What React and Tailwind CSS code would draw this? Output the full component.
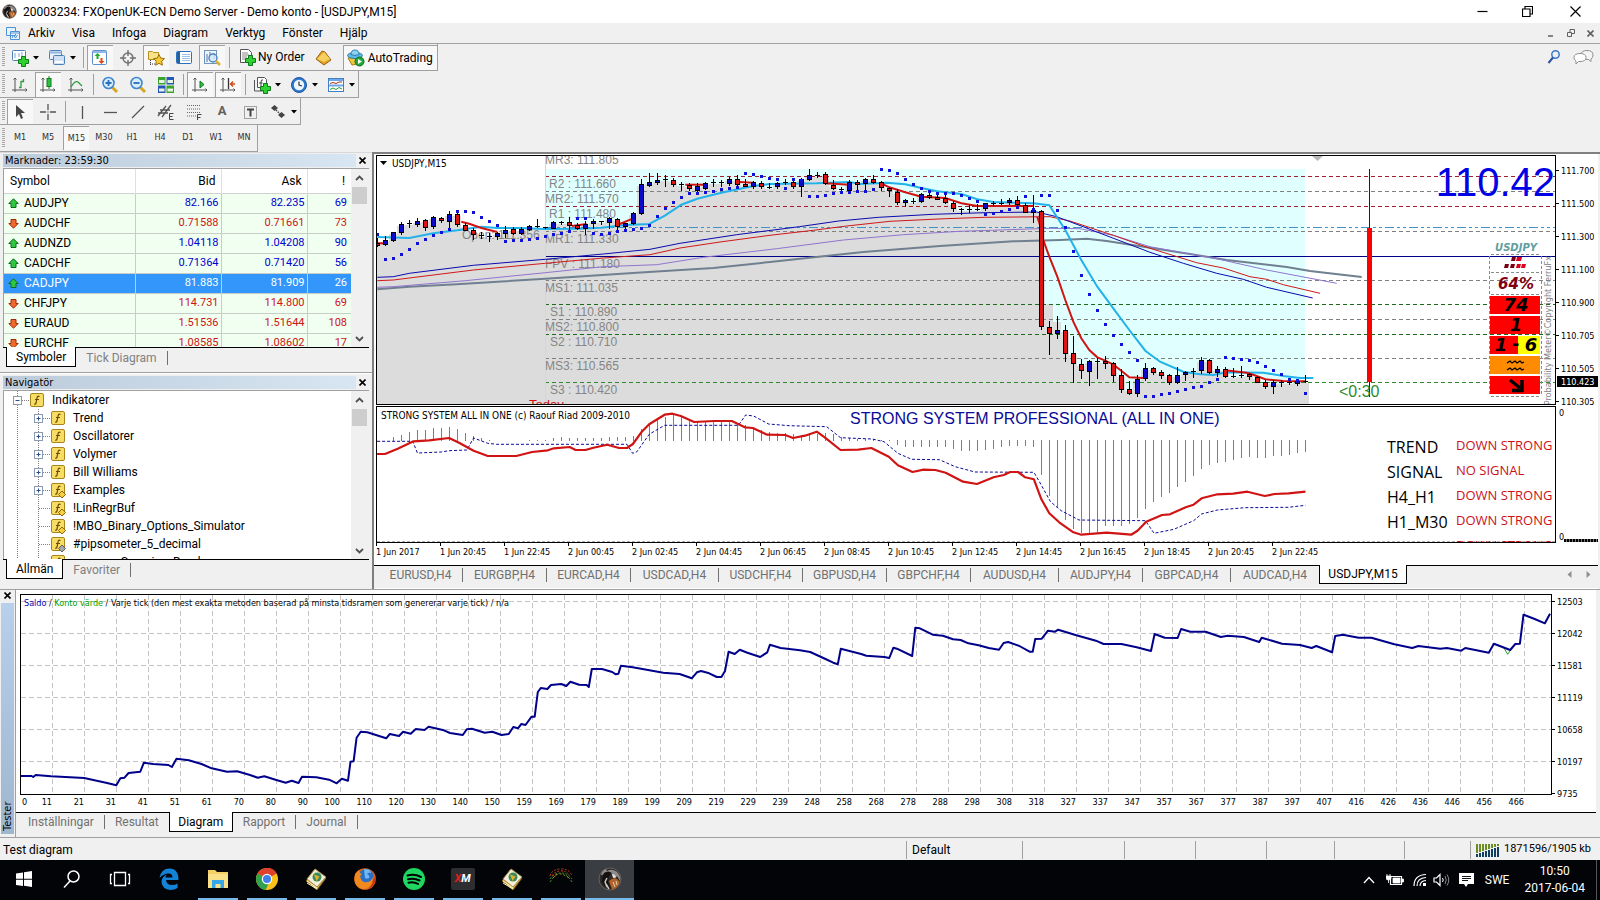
import React from "react";

const SMALL = "font-['DejaVu_Sans_Condensed','DejaVu_Sans',sans-serif]";

/* ---------- price chart data (third-of-a-pixel units, 24 units per bar) ---------- */

const CANDLES =
  "265 278 284 290 r,258 270 284 288 b,246 247 272 276 b,217 222 248 256 b,210 220 223 234 k,205 213 224 230 b,208 210 234 242 r,198 202 230 238 b,200 203 212 218 r,183 192 215 244 b,186 192 226 230 r,218 225 242 244 r,235 240 256 270 r,246 256 259 268 k,248 258 261 276 k,246 250 261 270 b,228 240 251 264 b,232 238 251 254 r,232 237 251 254 b,226 229 239 242 b,208 229 233 234 k,230 231 234 236 k,212 217 236 238 b,213 217 220 226 k,202 217 227 240 r,220 225 238 240 r,214 222 236 256 b,208 213 223 236 b,212 214 217 224 k,202 205 218 236 b,204 206 230 240 r,218 220 230 244 b,186 190 221 224 b,87 102 191 195 b,69 97 107 110 b,70 90 97 104 b,75 88 92 112 k,84 90 104 112 r,96 102 105 122 k,100 104 118 122 r,98 108 122 130 b,97 100 116 120 b,88 95 98 110 k,90 96 99 112 k,82 87 102 108 b,75 87 104 108 r,88 102 108 110 r,92 96 112 116 b,92 98 112 116 r,100 110 113 118 k,96 100 112 116 b,88 96 99 106 k,84 97 112 116 r,84 86 112 140 b,57 76 90 92 b,66 74 77 84 k,66 72 103 104 r,90 104 116 120 r,112 117 121 124 k,90 96 122 126 b,90 97 106 122 r,84 88 102 122 b,75 88 98 102 r,92 97 114 122 r,112 114 124 140 r,118 126 158 164 r,146 150 158 170 b,144 152 155 162 k,130 133 156 158 b,122 135 142 146 r,132 140 146 150 r,134 144 158 162 r,154 158 176 185 r,174 176 180 194 k,166 177 180 190 k,162 177 180 182 k,158 160 178 182 b,154 158 161 168 k,148 158 161 164 k,144 150 160 164 b,138 150 166 170 r,160 166 188 190 r,135 181 188 218 b,180 182 530 540 r,514 532 551 614 r,498 541 551 568 b,524 541 611 636 r,558 610 643 698 r,626 642 662 686 r,630 633 665 708 b,624 633 637 686 k,618 632 641 656 r,636 640 677 696 r,658 676 719 730 r,694 718 731 734 r,676 687 731 740 b,640 655 686 694 b,650 655 668 676 r,660 667 677 686 r,672 676 700 704 r,652 675 698 702 b,662 666 676 692 b,655 664 667 684 k,622 630 662 672 b,626 630 668 672 r,648 657 668 680 b,650 657 682 684 r,654 679 682 684 k,648 676 679 684 k,668 671 680 690 r,678 680 698 700 r,690 697 712 718 r,690 697 710 732 b,690 697 700 710 k,688 697 700 706 k,690 694 700 708 b,676 693 696 698 k"
    .split(",")
    .map((s) => {
      const [h, t, b, l, c] = s.split(" ");
      return { h: +h, t: +t, b: +b, l: +l, c };
    });

const DOTS = [
  252, 326, 323, 311, 296, 279, 266, 254, 246, 238, 183, 183, 185, 201, 213, 225, 272, 270, 270, 267, 264, 258, 252, 248, 244, 205, 205, 250,
  252, 250, 244, 240, 236, 234, 226, 198, 175, 156, 140, 130, 128, 127, 122, 116, 114, 112, 70, 72, 78, 84, 86, 114, 88, 90, 138, 138, 136,
  130, 126, 126, 124, 124, 116, 57, 61, 70, 88, 102, 114, 124, 128, 129, 130, 135, 145, 154, 192, 189, 184, 177, 172, 139, 178, 135, 135, 180,
  231, 303, 376, 433, 480, 522, 555, 582, 606, 630, 738, 738, 732, 728, 722, 716, 711, 708, 695, 688, 620, 624, 626, 630, 636, 648, 660, 673,
  688, 689, 730,
];

const AVERAGES = [
  { color: "#708090", w: 2, pts: "22,418 118,410 260,403 526,386 800,368 1030,354 1200,336 1360,319 1480,306 1710,288 1930,274 2070,270 2150,266 2210,273 2340,293 2460,312 2570,330 2750,351 2820,363 2975,381" },
  { color: "#9075cf", w: 1, pts: "22,412 70,410 286,392 526,368 700,350 860,344 1000,322 1220,296 1420,270 1600,254 1770,244 1890,240 2040,235 2130,236 2230,256 2340,290 2460,312 2540,326 2690,360 2900,400" },
  { color: "#d01818", w: 1, pts: "22,392 70,390 310,360 526,340 700,324 840,314 930,294 1050,276 1200,256 1330,241 1430,228 1560,214 1726,206 1846,202 2040,200 2100,213 2230,256 2340,295 2480,338 2560,354 2640,380 2690,388 2740,404 2850,430" },
  { color: "#0a0ab0", w: 1, pts: "22,382 70,380 118,370 310,346 526,328 700,312 840,298 930,280 1100,254 1288,230 1406,213 1526,202 1690,193 1846,188 2000,186 2060,200 2160,238 2340,307 2440,340 2540,370 2620,388 2690,412 2828,444" },
  { color: "#22b2ea", w: 2, pts: "22,261 118,264 190,250 262,241 334,230 382,234 454,234 526,237 622,236 694,233 766,225 838,222 886,196 934,164 982,146 1054,128 1150,108 1200,102 1340,100 1438,96 1470,102 1550,98 1606,103 1654,114 1702,124 1774,132 1822,148 1870,156 1942,158 1990,160 2038,166 2086,240 2134,330 2182,410 2230,475 2278,540 2326,602 2370,635 2440,665 2490,673 2530,675 2570,667 2680,668 2740,678 2790,684 2830,684" },
  ...[
    "22,280 40,280",
    "274,215 300,222 334,234 382,246",
    "606,228 650,222",
    "742,225 790,205",
    "946,104 1006,104",
    "1110,96 1150,98",
    "1366,100 1438,104",
    "1534,100 1558,112 1606,127 1654,140 1726,144 1774,160 1822,168 1870,168 1990,168",
    "2002,200 2010,225 2020,270 2038,320 2062,380 2086,450 2110,515 2134,565 2158,600 2182,622 2206,632 2230,644 2254,662 2278,682 2320,684",
    "2566,661 2630,668 2650,674 2686,688 2740,693 2806,694",
  ].map((pts) => ({ color: "#d01414", w: 2, pts })),
];

const LEVELS = [
  [79, "#a02030", "4 3"],
  [169, "#a02030", "4 3"],
  [124, "#808080", "4 3"],
  [244, "#808080", "4 3"],
  [391, "#808080", "4 3"],
  [508, "#808080", "4 3"],
  [625, "#808080", "4 3"],
  [463, "#1c6b1c", "4 3"],
  [553, "#1c6b1c", "4 3"],
  [697, "#2e8b2e", "4 3"],
  [232, "#3f93c9", "9 3 3 3 3 3"],
];

const LEVEL_LABELS = [
  ["MR3: 111.805", 545, 164],
  ["R2 : 111.660", 549, 188],
  ["MR2: 111.570", 545, 203],
  ["R1 : 111.480", 549, 218],
  ["MR1: 111.330", 545, 243],
  ["FPV : 111.180", 545, 268],
  ["MS1: 111.035", 545, 292],
  ["S1 : 110.890", 550, 316],
  ["MS2: 110.800", 545, 331],
  ["S2 : 110.710", 550, 346],
  ["MS3: 110.565", 545, 370],
  ["S3 : 110.420", 550, 394],
];

const barX = (i) => 377 + 8 * i;
const barY = (v) => Math.round(150 + v / 3);
const FILL = { r: "#dc1414", b: "#0a0ac8", k: "#000" };

function shadePath() {
  const tops = CANDLES.map((c, i) => (i === 84 ? 463 : i === 85 ? 515 : c.t + 6));
  let d = "M377 405";
  tops.forEach((t, i) => {
    d += ` L${barX(i) - 4} ${barY(t)} H${barX(i) + 4}`;
  });
  return d + " V405 Z";
}

function PriceChart() {
  return (
    <svg className="block h-full w-full" role="img" aria-label="USDJPY,M15">
      <g transform="translate(-377,-156)">
        <rect x="545" y="169" width="760" height="236" fill="#e0ffff" />
        <path d={shadePath()} fill="#dcdcdc" />
        <g shapeRendering="crispEdges">
          {LEVELS.map(([y, c, dash]) => (
            <line key={y} x1="545" x2="1555" y1={barY(y) + 0.5} y2={barY(y) + 0.5} stroke={c} strokeDasharray={dash} />
          ))}
          <line x1="545" x2="1555" y1="256.5" y2="256.5" stroke="#00008b" />
          <rect x="545" y="156" width="1" height="249" fill="#f5f000" />
        </g>
        <g fill="#858585" fontSize="12" className="font-['Liberation_Sans',Arial,sans-serif]">
          <text x="462" y="239">Open: 111.356</text>
          {LEVEL_LABELS.map(([t, x, y]) => (
            <text key={t} x={x} y={y}>{t}</text>
          ))}
          <text x="529" y="409" fontSize="13" fill="#d01414">Today</text>
        </g>
        <g transform="translate(370,150)">
          {AVERAGES.map((a) => (
            <polyline
              key={a.pts}
              points={a.pts.split(" ").map((p) => p.split(",").map((n) => (n / 3).toFixed(1)).join(",")).join(" ")}
              fill="none"
              stroke={a.color}
              strokeWidth={a.w}
            />
          ))}
        </g>
        <g shapeRendering="crispEdges">
          {CANDLES.map((c, i) => (
            <g key={i}>
              <line x1={barX(i) + 0.5} x2={barX(i) + 0.5} y1={barY(c.h)} y2={barY(c.l)} stroke="#000" />
              {c.c === "k" ? (
                <rect x={barX(i) - 2} y={barY(c.t)} width="5" height="1" fill="#000" />
              ) : (
                <rect x={barX(i) - 1.5} y={barY(c.t) + 0.5} width="4" height={Math.max(2, barY(c.b) - barY(c.t) - 1)} fill={FILL[c.c]} stroke="#000" strokeWidth="1" />
              )}
            </g>
          ))}
          {DOTS.map((v, i) => (
            <rect key={i} x={barX(i) - 1} y={barY(v) - 1} width="3" height="3" fill="#1010d8" />
          ))}
          <rect x="1369" y="169" width="1" height="228" fill="#6b0000" />
          <rect x="1367" y="228" width="5" height="154" fill="#ff0000" />
        </g>
        <path d="M380 161 h7 l-3.5 4 z" fill="#000" />
        <text x="392" y="167" fontSize="10" className={SMALL}>USDJPY,M15</text>
        <path d="M1312 156 h11 l-5.5 5 z" fill="#b8b8b8" />
        <text x="1555" y="196" fontSize="40" textAnchor="end" fill="#0000e6" className="font-['Liberation_Sans',Arial,sans-serif]">110.42</text>
        <text x="1339" y="397" fontSize="16" fill="#2e8b2e" className="font-['Liberation_Sans',Arial,sans-serif]">&lt;0:30</text>
        <Meter />
      </g>
    </svg>
  );
}

function Meter() {
  return (
    <g className="font-['DejaVu_Sans',Verdana,sans-serif]" fontWeight="bold" fontStyle="italic" textAnchor="middle">
      <text x="1516" y="251" fontSize="10" fill="#5f9ea0">USDJPY</text>
      <g stroke="#8a8a8a" strokeDasharray="3 2" shapeRendering="crispEdges">
        <path d="M1489.5 256 V396 M1541.5 256 V396 M1491 254.5 H1540 M1491 272.5 H1540 M1491 294.5 H1540 M1491 396.5 H1540" />
      </g>
      <path d="M1512 257h4l-1 4h-4z M1505 264h4l-1 4h-4z M1511 264h4l-1 4h-4z" fill="#7a0010" />
      <path d="M1517 257h5l-1 4h-5z M1517 264h4l-1 4h-4z M1522 264h4l-1 4h-4z" fill="#d8001c" />
      <text x="1516" y="289" fontSize="15" fill="#800010">64%</text>
      <g shapeRendering="crispEdges">
        <rect x="1490" y="296" width="50" height="18" fill="#ff0000" />
        <rect x="1490" y="316" width="50" height="18" fill="#ff0000" />
        <rect x="1490" y="336" width="28" height="18" fill="#ff0000" />
        <rect x="1518" y="336" width="22" height="18" fill="#ffff00" />
        <rect x="1490" y="356" width="50" height="18" fill="#ff8c00" />
        <rect x="1490" y="376" width="50" height="18" fill="#ff0000" />
      </g>
      <g fontSize="18" fill="#000">
        <text x="1516" y="311">74</text>
        <text x="1516" y="331">1</text>
        <text x="1501" y="351">1</text>
        <text x="1516" y="350">-</text>
        <text x="1531" y="351">6</text>
      </g>
      <path d="M1507 363 l3-2 2 2 3-2 2 2 3-2 2 2 2-1 M1507 370 l3-2 2 2 3-2 2 2 3-2 2 2 2-1" fill="none" stroke="#000" strokeWidth="1.2" />
      <path d="M1510 380 L1520 388 M1522 380 V390.500 H1512" fill="none" stroke="#000" strokeWidth="3.5" />
      <text transform="translate(1551,256) rotate(-90)" textAnchor="end" fontSize="9" fontWeight="normal" fontStyle="normal" fill="#808080" className={SMALL}>
        Probability Meter©Copyright FerruFx
      </text>
    </g>
  );
}

function PriceAxis() {
  const labels = ["111.700", "111.500", "111.300", "111.100", "110.900", "110.705", "110.505", "110.305"];
  return (
    <svg className={`block h-full w-full ${SMALL}`} fontSize="9" aria-label="Price axis">
      {labels.map((t, i) => (
        <g key={t}>
          <rect x="0" y={15 + 33 * i} width="3" height="1" />
          <text x="5" y={19 + 33 * i}>{t}</text>
        </g>
      ))}
      <rect x="1" y="221" width="41" height="11" />
      <text x="5" y="230" fill="#fff">110.423</text>
    </svg>
  );
}

/* ---------- indicator window ---------- */

const HIST = [
  0, 0, 4, 6, 9, 11, 11, 13, 13, 14, 12, 8, 5, 3, 1, 0, 0, 0, 0, 1, 1, 1, 3, 4, 3, 3, 3, 3, 3, 4, 4, 4, 5, 12, 17, 22, 24, 26, 24, 20, 19, 19,
  19, 19, 19, 18, 16, 13, 11, 9, 8, 8, 7, 6, 6, 7, 8, 7, 4, 3, 2, 2, 2, 1, 1, -5, -7, -7, -7, -7, -7, -7, -9, -11, -11, -11, -10, -9, -7, -6,
  -6, -6, -7, -35, -56, -67, -80, -89, -93, -93, -93, -86, -86, -86, -84, -78, -69, -62, -57, -53, -47, -42, -36, -29, -25, -23, -22, -20, -18,
  -17, -18, -18, -16, -16, -15, -13, -12,
];
const STRONG =
  "18,162 38,162 70,146 110,124 150,121 200,114 225,128 262,152 298,168 370,168 410,156 450,151 465,145 505,141 520,150 545,150 565,143 600,134 630,144 650,144 665,132 686,97 706,73 745,44 765,41 786,48 820,66 870,63 915,63 948,82 968,84 1004,104 1050,105 1070,114 1100,107 1130,95 1150,112 1190,150 1235,149 1268,144 1312,170 1335,196 1372,216 1400,209 1430,210 1456,218 1500,245 1535,252 1577,232 1603,225 1619,216 1639,216 1657,232 1679,238 1698,298 1718,340 1743,367 1779,397 1799,404 1863,398 1925,404 1941,392 1963,365 2003,345 2023,343 2063,322 2083,314 2103,295 2143,283 2183,281 2219,275 2263,288 2288,282 2323,280 2366,275";
const SIGNAL =
  "18,124 108,124 120,159 180,156 200,152 245,150 262,114 298,130 320,133 650,133 664,160 675,155 706,103 745,76 932,76 950,45 970,48 1008,72 1060,77 1155,80 1190,113 1270,117 1300,125 1335,160 1370,178 1440,179 1480,200 1530,216 1679,217 1693,245 1721,305 1748,332 1793,360 1961,362 1983,400 2033,388 2083,362 2103,342 2143,330 2213,323 2323,322 2366,316";
const scale = (s, kx, dx, dy) =>
  s.split(" ").map((p) => {
    const [x, y] = p.split(",");
    return `${(dx + x / kx).toFixed(1)},${(dy + y / 3).toFixed(1)}`;
  }).join(" ");

function IndicatorChart() {
  const rows = [["TREND", "DOWN STRONG"], ["SIGNAL", "NO SIGNAL"], ["H4_H1", "DOWN STRONG"], ["H1_M30", "DOWN STRONG"], ["", "DOWN STRONG"]];
  return (
    <svg className="block h-full w-full" role="img" aria-label="Strong system indicator">
      <g transform="translate(-377,-407)">
        <g fill="#708090" shapeRendering="crispEdges">
          {HIST.map((v, i) => (
            <rect key={i} x={barX(i)} y={v > 0 ? 441 - v : 440} width="1" height={Math.abs(v)} />
          ))}
        </g>
        <line x1="377" x2="1555" y1="541.5" y2="541.5" stroke="#b0b0b0" strokeDasharray="3 2" />
        <polyline points={scale(SIGNAL, 2.529, 370, 400)} fill="none" stroke="#0a0a96" strokeDasharray="3 2" />
        <polyline points={scale(STRONG, 2.529, 370, 400)} fill="none" stroke="#d01414" strokeWidth="2.2" strokeLinejoin="round" />
        <text x="381" y="419" fontSize="10" className={SMALL}>STRONG SYSTEM ALL IN ONE (c) Raouf Riad 2009-2010</text>
        <text x="850" y="424" fontSize="16" fill="#0a0a96" className="font-['Liberation_Sans',Arial,sans-serif]">STRONG SYSTEM PROFESSIONAL (ALL IN ONE)</text>
        <g className="font-['Open_Sans',sans-serif]">
          {rows.map(([a, b], i) => (
            <g key={i}>
              <text x="1387" y={453 + 25 * i} fontSize="16" fill="#000">{a}</text>
              <text x="1456" y={450 + 25 * i} fontSize="13" fill="#cc1018">{b}</text>
            </g>
          ))}
        </g>
      </g>
    </svg>
  );
}

/* ---------- tester chart ---------- */

const BALANCE =
  "40,573 62,573 65,576 70,570 100,574 165,579 210,594 228,601 236,580 244,578 252,564 275,560 282,533 300,537 330,540 337,546 346,521 370,526 395,537 415,550 445,560 465,559 490,570 505,578 518,574 540,584 560,593 572,587 585,594 592,575 620,577 645,584 660,595 670,581 682,587 687,530 693,529 699,458 707,440 720,442 757,460 764,447 782,453 790,440 805,446 815,432 832,435 840,425 870,436 882,444 907,450 915,433 925,431 950,443 965,440 983,450 997,447 1006,426 1015,430 1022,417 1030,420 1042,395 1048,395 1054,321 1060,309 1073,312 1080,300 1100,297 1110,303 1118,290 1135,299 1150,300 1154,306 1160,252 1180,252 1200,261 1207,268 1212,266 1217,242 1240,247 1300,263 1332,267 1356,280 1366,262 1374,258 1390,265 1405,276 1414,276 1421,258 1428,200 1440,207 1450,194 1465,203 1490,216 1504,202 1509,179 1530,189 1568,196 1588,201 1618,222 1633,233 1642,238 1648,191 1663,197 1688,207 1698,212 1733,216 1743,219 1751,188 1758,191 1788,213 1794,128 1803,130 1828,149 1848,152 1868,163 1883,165 1898,175 1918,181 1938,189 1958,194 1967,174 1976,171 1998,183 2018,200 2024,200 2029,162 2042,161 2054,137 2068,140 2074,134 2108,150 2148,167 2163,177 2198,177 2228,187 2256,198 2263,147 2283,158 2308,159 2315,132 2333,140 2363,140 2393,156 2406,152 2438,156 2468,171 2473,158 2513,176 2548,180 2571,189 2580,183 2611,202 2617,153 2632,149 2663,158 2688,158 2733,178 2768,189 2780,183 2823,191 2836,189 2864,197 2872,189 2918,203 2928,176 2960,195 2970,177 2979,176 2986,89 3008,102 3028,115 3038,86";

function TesterChart() {
  return (
    <svg className="block h-full w-full" role="img" aria-label="Diagram">
      <g transform="translate(-21,-595)">
        <g stroke="#c4c4c4" strokeDasharray="5 3" shapeRendering="crispEdges">
          {Array.from({ length: 47 }, (_, i) => (
            <line key={i} x1={52.5 + 32 * i} x2={52.5 + 32 * i} y1="595" y2="794" />
          ))}
          {Array.from({ length: 6 }, (_, i) => (
            <line key={i} x1="21" x2="1551" y1={601.5 + 32 * i} y2={601.5 + 32 * i} />
          ))}
        </g>
        <polyline points={scale("2948,190 2955,208 2961,195", 1.96, 0, 585)} fill="none" stroke="#20a020" />
        <polyline points={scale(BALANCE, 1.96, 0, 585)} fill="none" stroke="#00008b" strokeWidth="2" strokeLinejoin="round" />
        <text x="24" y="606" fontSize="9" className={SMALL}>
          <tspan fill="#0000b0">Saldo</tspan>
          <tspan> / </tspan>
          <tspan fill="#00a000">Konto värde</tspan>
          <tspan> / Varje tick (den mest exakta metoden baserad på minsta tidsramen som genererar varje tick) / n/a</tspan>
        </text>
      </g>
    </svg>
  );
}

const TESTER_X = [
  11, 21, 31, 41, 51, 61, 70, 80, 90, 100, 110, 120, 130, 140, 150, 159, 169, 179, 189, 199, 209, 219, 229, 239, 248, 258, 268, 278, 288, 298,
  308, 318, 327, 337, 347, 357, 367, 377, 387, 397, 407, 416, 426, 436, 446, 456, 466,
];

/* ---------- icons ---------- */

const I = ({ children, w = 18, h = 18, className = "" }) => (
  <svg width={w} height={h} viewBox={`0 0 ${w} ${h}`} fill="none" className={`block shrink-0 ${className}`} aria-hidden="true">{children}</svg>
);
const Plus = ({ x = 7, y = 7 }) => (
  <path transform={`translate(${x},${y})`} d="M3.500 .5h4v3h3v4h-3v3h-4v-3h-3v-4h3z" fill="#2fd02f" stroke="#0a7a1a" />
);
const Caret = () => (
  <svg width="6" height="4" viewBox="0 0 6 4" className="block shrink-0" aria-hidden="true"><path d="M0 0h6l-3 3.500z" fill="#000" /></svg>
);
const Axes = () => <path d="M4 2v14M1 14h15M2.500 3.500L4 2l1.500 1.500M14.500 12.500L16 14l-1.500 1.500" stroke="#555" strokeWidth="1" />;

const icons = {
  newChart: <I><rect x="1.500" y="1.500" width="13" height="10" rx="1" fill="#fff" stroke="#4b7fb8" /><path d="M4 4v5M8 4v4M11 3v4" stroke="#7fa3cc" /><Plus /></I>,
  profiles: <I><rect x="1.500" y="1.500" width="12" height="9" rx="1" fill="#e8f1fb" stroke="#4b7fb8" /><path d="M1.500 3.500h12" stroke="#8fb4de" strokeWidth="2" /><rect x="5.500" y="6.500" width="11" height="9" rx="1" fill="#cfe0f5" stroke="#4b7fb8" /><path d="M7 13h8" stroke="#fff" strokeWidth="2" /></I>,
  market: <I><rect x="1.500" y="1.500" width="14" height="14" rx="1" fill="#fff" stroke="#5b8fd0" /><path d="M2 3h13" stroke="#8fb9ec" strokeWidth="2" /><path d="M6.500 4l3 3h-2v3h-2v-3h-2z" fill="#1fae2c" /><path d="M10.500 15l3-3h-2v-3h-2v3h-2z" fill="#e04a10" /></I>,
  cross: <I><circle cx="9" cy="9" r="5" stroke="#707070" strokeWidth="1.400" /><path d="M9 1v6M9 11v6M1 9h6M11 9h6" stroke="#707070" strokeWidth="1.400" /></I>,
  nav: <I><path d="M1.500 2.500h4l1 1h5v7h-10z" fill="#f7e28a" stroke="#b89020" /><path d="M3.500 11v5M3 15h5" stroke="#444" strokeDasharray="1 1" /><path d="M12 5.500l1.700 3.600 3.800.5-2.800 2.700.7 3.900-3.400-1.900-3.400 1.900.7-3.900-2.800-2.700 3.800-.5z" fill="#f6c934" stroke="#9a6f10" /></I>,
  data: <I><rect x="1.500" y="2.500" width="15" height="12" rx="1" fill="#fff" stroke="#2a6fc0" /><rect x="2" y="3" width="3" height="11" fill="#2a5f9e" /><path d="M7 5.500h8M7 7.500h8M7 9.500h8M7 11.500h8" stroke="#9cc0e8" /></I>,
  tester: <I><rect x="1.500" y="1.500" width="12" height="13" fill="#eef4fb" stroke="#6f94bd" /><path d="M4 5v8M7 3v5M11 4v6" stroke="#5577a0" /><circle cx="10" cy="9" r="4" fill="#d4e8fb" fillOpacity=".8" stroke="#4b85c4" strokeWidth="1.400" /><path d="M13 12l4 4" stroke="#e0b030" strokeWidth="2.500" /></I>,
  order: <I><path d="M2.500 1.500h8l3 3v10h-11z" fill="#fff" stroke="#555" /><path d="M4 5h6M4 7h7M4 9h5M4 11h3" stroke="#888" /><Plus /></I>,
  book: <I><path d="M1 11l6-8 3 1 6 8-7 5z" fill="#e0a020" stroke="#9a6510" /><path d="M2 11l7 3 6-3-6-7z" fill="#f5cf60" /></I>,
  auto: <I><path d="M1 9l13-1-3 7-6 1z" fill="#f2c53a" stroke="#a77c16" /><ellipse cx="8" cy="6.500" rx="7.500" ry="3" fill="#5fb8e0" stroke="#2a7fae" /><path d="M4 5.500q0-4.500 4-4.500t4 4.500q-4 2-8 0" fill="#8fd2f0" stroke="#2a7fae" /><circle cx="12.500" cy="12.500" r="4.500" fill="#22a83a" stroke="#0c7020" /><path d="M11 10l4 2.500-4 2.500z" fill="#fff" /></I>,
  bars: <I><Axes /><path d="M8 11.500h2.500M10 5v7M10 5.500h3M12.500 3v3" stroke="#2a9a3a" strokeWidth="1.300" /></I>,
  candles: <I><Axes /><path d="M10 0v13" stroke="#107a20" /><rect x="8" y="2.500" width="4" height="8" fill="#2fc040" stroke="#107a20" /></I>,
  line: <I><Axes /><path d="M4 11q4-7 7-5l4 4" stroke="#2a9a3a" strokeWidth="1.200" /></I>,
  zoomIn: <I><path d="M11 11l5 5" stroke="#d8a520" strokeWidth="3" /><circle cx="7.500" cy="7" r="5.500" fill="#d8edfc" stroke="#3f86cc" strokeWidth="1.600" /><path d="M7.500 4v6M4.500 7h6" stroke="#2a6db8" strokeWidth="1.800" /></I>,
  zoomOut: <I><path d="M11 11l5 5" stroke="#d8a520" strokeWidth="3" /><circle cx="7.500" cy="7" r="5.500" fill="#d8edfc" stroke="#3f86cc" strokeWidth="1.600" /><path d="M4.500 7h6" stroke="#2a6db8" strokeWidth="1.800" /></I>,
  tile: <I><rect x="1" y="1" width="7.500" height="7.500" fill="#3aa52a" /><rect x="9.500" y="1" width="7.500" height="7.500" fill="#2a55b8" /><rect x="1" y="9.500" width="7.500" height="7.500" fill="#2a55b8" /><rect x="9.500" y="9.500" width="7.500" height="7.500" fill="#3aa52a" /><path d="M2 5.500h5.500M10.500 5.500h5.500M2 14h5.500M10.500 14h5.500" stroke="#e6f3e0" strokeWidth="3" /></I>,
  scroll: <I><Axes /><path d="M9 5l4 3.500-4 3.500z" fill="#2fc040" stroke="#107a20" /></I>,
  shift: <I><Axes /><path d="M9.500 2v11" stroke="#333" strokeWidth="1.300" /><path d="M16 8h-4M14 5.500l-2.500 2.500 2.500 2.500" stroke="#d04a10" strokeWidth="1.400" /></I>,
  indicator: <I><path d="M4.500 1.500h7l2 2v8h-9z" fill="#fff" stroke="#555" /><path d="M1.500 4v11h8" stroke="#555" /><path d="M10 4q-2-1-2 2v4M6 7h3.500" stroke="#444" /><Plus /></I>,
  clock: <I><circle cx="9" cy="9" r="7.500" fill="#2f78d0" stroke="#1c559e" /><circle cx="9" cy="9" r="5.200" fill="#eef6ff" /><path d="M9 5.500v3.500l3 1" stroke="#333" strokeWidth="1.200" /></I>,
  template: <I><rect x="1.500" y="2.500" width="15" height="13" fill="#fff" stroke="#3f80c8" /><path d="M2 4h14M2 9.500h14" stroke="#6fa8e4" strokeWidth="2" /><path d="M3 7.500l3-1 3 1 3-1.500h3" stroke="#a03020" /><path d="M3 13.500l3-1.500 3 1.500 3-2 3 1.500" stroke="#2a9a3a" /></I>,
  arrow: <I><path d="M5 2v12l3-3 2 5 2-1-2-5h4z" fill="#444" /></I>,
  hair: <I><path d="M9 1v6M9 11v6M1 9h6M11 9h6" stroke="#555" strokeWidth="1.300" /><circle cx="9" cy="9" r=".8" fill="#555" /></I>,
  vline: <I><path d="M9.500 3v13" stroke="#555" strokeWidth="1.300" /></I>,
  hline: <I><path d="M3 9.500h13" stroke="#555" strokeWidth="1.300" /></I>,
  trend: <I><path d="M3 15L15 3" stroke="#555" strokeWidth="1.300" /></I>,
  channel: <I><path d="M1 13L9 3M5 14L14 2M1 10h10M3 7h10" stroke="#555" strokeWidth="1.300" /><path d="M12.500 10.500v6h4M12.500 13.500h3M12.500 10.500h4" stroke="#444" /></I>,
  fibo: <I><path d="M2 2.500h14M2 6h14M2 9.500h14M2 13h9" stroke="#666" strokeDasharray="1 1" /><path d="M12.500 17v-5.500h4M12.500 14.500h3" stroke="#444" /></I>,
  label: <I><rect x="3.500" y="3.500" width="12" height="12" stroke="#555" strokeDasharray="1 1" /><path d="M6 6.500h7M9.500 6.500v7" stroke="#444" strokeWidth="2" /></I>,
  shapes: <I><path d="M5.500 2l3.500 3-3.500 3-3.500-3z" fill="#444" /><path d="M7 7l4 4" stroke="#444" strokeWidth="1.500" strokeDasharray="1.500 1" /><path d="M12.500 9l3.500 3-3.500 3-3.500-3z" fill="#444" /></I>,
};

/* ---------- chrome ---------- */

const Tool = ({ name, icon, pressed, caret }) => (
  <button type="button" aria-label={name} className={`flex h-[25px] shrink-0 items-center gap-1 pl-[3px] ${caret ? "w-[35px]" : "w-[26px]"} ${pressed ? "border-l border-t border-[#a0a0a0] bg-[#f8f8f8]" : "border-l border-t border-transparent"}`}>
    {icons[icon]}
    {caret && <Caret />}
  </button>
);
const Sep = () => <span className="ml-[2px] mr-px h-[21px] w-px shrink-0 bg-[#a0a0a0]" />;
const Grip = () => <span className="h-[20px] w-[3px] shrink-0 bg-[repeating-linear-gradient(#a8a8a8_0_1px,#f0f0f0_1px_2px)]" />;

function ToolRow({ children, className = "" }) {
  return <div className={`flex w-max items-center gap-[2px] border-b border-r border-[#a0a0a0] pl-[2px] ${className}`}><Grip />{children}</div>;
}

const X = ({ className = "" }) => (
  <svg width="7" height="7" viewBox="0 0 7 7" className={`block shrink-0 ${className}`} aria-hidden="true"><path d="M.5.5l6 6M6.500.5l-6 6" stroke="currentColor" strokeWidth="1.600" /></svg>
);

const DockTitle = ({ children }) => (
  <div className="flex h-[14px] items-center">
    <h2 className={`h-[13px] flex-1 bg-linear-to-r from-[#bccbda] to-[#d8e6f3] pl-[2px] text-[11px] leading-[13px] ${SMALL}`}>{children}</h2>
    <button type="button" aria-label="Stäng" className="flex h-[13px] w-[13px] items-center justify-center"><X /></button>
  </div>
);

const Chevron = ({ up }) => (
  <svg width="9" height="6" viewBox="0 0 9 6" className="block" aria-hidden="true"><path d={up ? "M1 5l3.500-3.500L8 5" : "M1 1l3.500 3.500L8 1"} fill="none" stroke="#505050" strokeWidth="1.800" /></svg>
);

const ScrollBar = () => (
  <div className="flex w-[18px] shrink-0 flex-col items-center bg-[#f0f0f0] pr-[2px]">
    <button type="button" aria-label="Upp" className="flex h-[18px] w-full items-center justify-center"><Chevron up /></button>
    <span className="h-[17px] w-[15px] bg-[#cdcdcd] first:mt-0" />
    <button type="button" aria-label="Ned" className="mt-auto flex h-[16px] w-full items-center justify-center"><Chevron /></button>
  </div>
);

const QUOTES = [
  ["AUDJPY", "82.166", "82.235", "69", 1],
  ["AUDCHF", "0.71588", "0.71661", "73", 0],
  ["AUDNZD", "1.04118", "1.04208", "90", 1],
  ["CADCHF", "0.71364", "0.71420", "56", 1],
  ["CADJPY", "81.883", "81.909", "26", 1],
  ["CHFJPY", "114.731", "114.800", "69", 0],
  ["EURAUD", "1.51536", "1.51644", "108", 0],
  ["EURCHF", "1.08585", "1.08602", "17", 0],
];

const Arrow = ({ up }) => (
  <svg width="11" height="11" viewBox="0 0 11 11" className="block" aria-hidden="true">
    <path d={up ? "M5.500.8l4.700 4.700h-2.200v4h-5v-4h-2.200z" : "M5.500 10.200l4.700-4.700h-2.200v-4h-5v4h-2.200z"} fill={up ? "#2fc840" : "#f06a30"} stroke={up ? "#0c6a1c" : "#9a2a08"} />
  </svg>
);

function MarketWatch() {
  return (
    <section className="flex flex-col pl-[3px] pr-[3px]">
      <DockTitle>Marknader: 23:59:30</DockTitle>
      <div className="mt-px flex h-[179px] overflow-hidden border-l border-t border-[#a0a0a0] bg-white">
        <table className="w-full table-fixed border-collapse self-start text-[12px]">
          <colgroup><col /><col className="w-[86px]" /><col className="w-[86px]" /><col className="w-[44px]" /></colgroup>
          <thead>
            <tr className="h-[24px] border-b border-[#d0d0d0] bg-white">
              <th className="border-r border-[#e0e0e0] pl-[6px] text-left font-normal">Symbol</th>
              <th className="border-r border-[#e0e0e0] pr-[5px] text-right font-normal">Bid</th>
              <th className="border-r border-[#e0e0e0] pr-[5px] text-right font-normal">Ask</th>
              <th className="pr-[6px] text-right font-normal">!</th>
            </tr>
          </thead>
          <tbody>
            {QUOTES.map(([s, bid, ask, sp, up]) => {
              const sel = s === "CADJPY";
              const num = `text-right text-[11px] ${sel ? "text-white" : up ? "text-[#0000d0]" : "text-[#d01414]"}`;
              return (
                <tr key={s} className={`h-[20px] border-b border-[#c6cec6] ${sel ? "bg-[#3296fa] text-white" : "bg-[#f0fff0]"}`}>
                  <td className="border-r border-[#c6cec6] pl-[4px] leading-[19px]"><span className="flex items-center gap-[5px]"><Arrow up={up} />{s}</span></td>
                  <td className={`border-r border-[#c6cec6] pr-[2px] ${num}`}>{bid}</td>
                  <td className={`border-r border-[#c6cec6] pr-[2px] ${num}`}>{ask}</td>
                  <td className={`pr-[4px] ${num}`}>{sp}</td>
                </tr>
              );
            })}
          </tbody>
        </table>
        <ScrollBar />
      </div>
      <DockTabs active="Symboler" other="Tick Diagram" />
    </section>
  );
}

const DockTabs = ({ active, other }) => (
  <div className="flex h-[25px] items-start border-t border-black pl-[3px] text-[12px]">
    <button type="button" className="-mt-px h-[20px] border border-t-0 border-black bg-white px-[9px] leading-[18px]">{active}</button>
    <button type="button" className="mt-[3px] h-[14px] border-r border-[#707070] px-[10px] leading-[12px] text-[#808080]">{other}</button>
  </div>
);

const TREE = [
  ["Trend", 1, 0], ["Oscillatorer", 1, 0], ["Volymer", 1, 0], ["Bill Williams", 1, 0], ["Examples", 1, 1],
  ["!LinRegrBuf", 0, 1], ["!MBO_Binary_Options_Simulator", 0, 1], ["#pipsometer_5_decimal", 0, 2], ["average_Crossing_Bands", 0, 1],
];

const FIcon = ({ badge }) => (
  <svg width="15" height="15" viewBox="0 0 15 15" className="block shrink-0" aria-hidden="true">
    <rect x=".5" y=".5" width="13" height="13" rx="1.500" fill="#f7dd62" stroke="#a8841c" />
    <path d="M9.500 3.500q-2-1-2.500 1.500l-1 5q-.4 1.600-1.800 1M5 6.500h4" fill="none" stroke="#6a4a08" strokeWidth="1.200" />
    {badge > 0 && <path d="M11 8l3.500 3.500-3.500 3.500-3.500-3.500z" fill={badge === 2 ? "#a8a8a8" : "#f7d040"} stroke={badge === 2 ? "#606060" : "#8a6810"} />}
  </svg>
);

const Expander = ({ x, plus }) => (
  <g>
    <rect x={x - 4} y="5.500" width="8" height="8" fill="#fff" stroke="#8c9ab0" />
    <path d={`M${x - 2} 9.500h4${plus ? `M${x} 7.500v4` : ""}`} stroke="#2a4a90" />
  </g>
);

function Navigator() {
  return (
    <section className="flex flex-1 flex-col pl-[3px] pr-[3px]">
      <DockTitle>Navigatör</DockTitle>
      <div className="mt-px flex h-[169px] overflow-hidden border-l border-t border-[#a0a0a0] bg-white text-[12px]">
        <ul className="flex-1">
          <li className="flex h-[18px] items-center">
            <svg width="26" height="18" className="block shrink-0" aria-hidden="true"><path d="M13.500 0v18M14 9.500h11" stroke="#808080" strokeDasharray="1 1" /><Expander x={13.5} /></svg>
            <FIcon />
            <span className="pl-[7px]">Indikatorer</span>
          </li>
          {TREE.map(([t, open, badge]) => (
            <li key={t} className="flex h-[18px] items-center">
              <svg width="47" height="18" className="block shrink-0" aria-hidden="true"><path d="M13.500 0v18M34.500 0v18M35 9.500h11" stroke="#808080" strokeDasharray="1 1" />{open === 1 && <Expander x={34.5} plus />}</svg>
              <FIcon badge={badge} />
              <span className="pl-[7px]">{t}</span>
            </li>
          ))}
        </ul>
        <ScrollBar />
      </div>
      <DockTabs active="Allmän" other="Favoriter" />
    </section>
  );
}

const TIMES = ["1 Jun 2017", "1 Jun 20:45", "1 Jun 22:45", "2 Jun 00:45", "2 Jun 02:45", "2 Jun 04:45", "2 Jun 06:45", "2 Jun 08:45", "2 Jun 10:45", "2 Jun 12:45", "2 Jun 14:45", "2 Jun 16:45", "2 Jun 18:45", "2 Jun 20:45", "2 Jun 22:45"];
const CHART_TABS = ["EURUSD,H4", "EURGBP,H4", "EURCAD,H4", "USDCAD,H4", "USDCHF,H4", "GBPUSD,H4", "GBPCHF,H4", "AUDUSD,H4", "AUDJPY,H4", "GBPCAD,H4", "AUDCAD,H4"];
const WIDE = ["USDCAD,H4", "AUDUSD,H4", "GBPCAD,H4", "AUDCAD,H4"];

function Charts() {
  return (
    <main className="flex min-w-0 flex-1 flex-col border-l-2 border-t-2 border-[#808080] pr-[2px]">
      <div className="bg-white pl-[2px] pt-px">
        <div className="flex h-[250px]">
          <div className="min-w-0 flex-1 overflow-hidden border border-black"><PriceChart /></div>
          <div className="w-[42px]"><PriceAxis /></div>
        </div>
        <div className="mt-px flex h-[137px]">
          <div className="min-w-0 flex-1 overflow-hidden border border-black"><IndicatorChart /></div>
          <div className={`flex w-[42px] flex-col justify-between pl-[3px] pt-[2px] text-[9px] leading-[11px] ${SMALL}`}>
            <span>0</span>
            <span className="flex items-end">0<i className="mb-px h-[3px] flex-1 bg-[repeating-linear-gradient(90deg,#000_0_2px,#777_2px_3px)]" /></span>
          </div>
        </div>
        <div className={`flex h-[22px] overflow-hidden text-[9px] ${SMALL}`}>
          {TIMES.map((t) => (
            <span key={t} className="w-[64px] shrink-0 whitespace-nowrap leading-[12px] before:block before:h-[3px] before:w-px before:bg-black">{t}</span>
          ))}
        </div>
      </div>
      <div className="flex h-[19px] items-start border-t border-black pl-[5px] text-[12px]">
        {CHART_TABS.map((t) => (
          <button type="button" key={t} className={`mt-[2px] h-[14px] shrink-0 leading-[14px] text-[#707070] ${t === "AUDCAD,H4" ? "" : "border-r border-[#707070]"} ${WIDE.includes(t) ? "w-[88px]" : "w-[84px]"}`}>{t}</button>
        ))}
        <button type="button" className="-mt-px h-[19px] w-[88px] shrink-0 border border-t-0 border-black bg-white leading-[18px]">USDJPY,M15</button>
        <span className="ml-auto flex items-center gap-[14px] pr-[7px] pt-[5px]">
          <svg width="5" height="8" aria-hidden="true"><path d="M4.500 0v7L.5 3.500z" fill="#909090" /></svg>
          <svg width="5" height="8" aria-hidden="true"><path d="M.5 0v7l4-3.500z" fill="#909090" /></svg>
        </span>
      </div>
      <div className="mt-auto h-px bg-white" />
    </main>
  );
}

function Tester() {
  const tabs = ["Inställningar", "Resultat", "Diagram", "Rapport", "Journal"];
  return (
    <section className="flex h-[248px] border-t border-[#a0a0a0]">
      <div className="flex w-[15px] shrink-0 flex-col items-center">
        <button type="button" aria-label="Stäng" className="flex h-[11px] w-full items-center justify-center"><X /></button>
        <h2 className={`mb-[3px] mt-[2px] w-[13px] flex-1 rotate-180 bg-linear-to-t from-[#b8d0ec] to-[#9fb6ce] pt-[3px] text-[11px] leading-[13px] [writing-mode:vertical-rl] ${SMALL}`}>Tester</h2>
      </div>
      <div className="flex min-w-0 flex-1 flex-col border-l border-[#a0a0a0] pr-[4px]">
        <div className="h-[222px] bg-white pl-[4px] pt-[4px]">
          <div className="flex h-[201px]">
            <div className="min-w-0 flex-1 overflow-hidden border border-black"><TesterChart /></div>
            <div className={`flex w-[44px] flex-col pt-[2px] text-[9px] ${SMALL}`}>
              {["12503", "12042", "11581", "11119", "10658", "10197", "9735"].map((t) => (
                <span key={t} className="flex h-[32px] shrink-0 items-start gap-[2px] leading-[12px] before:mt-[5px] before:h-px before:w-[3px] before:bg-black">{t}</span>
              ))}
            </div>
          </div>
          <div className={`flex overflow-hidden pr-[44px] text-[9px] leading-[14px] ${SMALL}`}>
            <span className="-mr-[8px] w-[8px] shrink-0 pl-[2px]">0</span>
            {TESTER_X.map((n) => (
              <span key={n} className="w-[32px] shrink-0 text-right">{n}</span>
            ))}
          </div>
        </div>
        <div className="flex h-[20px] items-start border-t border-black pl-[2px] text-[12px]">
          {tabs.map((t) =>
            t === "Diagram" ? (
              <button type="button" key={t} className="-mt-px h-[20px] w-[64px] border border-t-0 border-black bg-white leading-[18px]">{t}</button>
            ) : (
              <button type="button" key={t} className={`mt-[2px] h-[14px] px-[10px] leading-[14px] text-[#707070] ${t === "Resultat" ? "" : "border-r border-[#707070]"}`}>{t}</button>
            )
          )}
        </div>
      </div>
    </section>
  );
}

/* ---------- task bar ---------- */

const Expert = () => (
  <I w={24} h={24}><path d="M2 14L11 2l11 9-9 12z" fill="#d9b24a" stroke="#7a5a14" /><path d="M3 12l8-10 11 8-9 10z" fill="#f4efd8" stroke="#a08848" /><circle cx="13" cy="10" r="4.500" fill="#3a8a5a" /><path d="M10 7.500l5.500 2-3 4.500z" fill="#e0b030" /><path d="M3 14l10 7M3 16l10 6" stroke="#fff6c0" /></I>
);
const Griffin = ({ size = 24 }) => (
  <svg width={size} height={size} viewBox="0 0 24 24" className="block shrink-0" aria-hidden="true">
    <circle cx="12" cy="12" r="11" fill="#2e2826" stroke="#6a625c" />
    <path d="M3 8q1-5 5-6l1 2q5-3 10 1 4 4 3 9l-3-5-2 3-3-5z" fill="#8d8c8c" />
    <path d="M6 6q4-3 8 0l-3 3-1 6 3 7q-6-1-9-7 0-6 2-9z" fill="#141210" />
    <path d="M11 14q4-4 8-2l3 3q-2 6-8 7.500z" fill="#b0622c" />
    <path d="M9 11l-2 4 2 5M8 17l3 5" stroke="#c8c4c0" strokeWidth="1.500" fill="none" />
    <path d="M14 7q3 0 4 3l-3 1z" fill="#e8e4de" /><path d="M15 15l2 5M18 14l1 4" stroke="#e8d0a8" />
  </svg>
);
const apps = {
  windows: <I w={18} h={18}><path d="M1 3.500l7-1v6.200H1zM9 2.300L17 1v7.700H9zM1 9.700h7v6.200l-7-1zM9 9.700h8V17l-8-1.200z" fill="#fff" /></I>,
  search: <I w={20} h={20}><circle cx="11.500" cy="7.500" r="5.500" stroke="#fff" strokeWidth="1.500" /><path d="M8 12l-6 6.500" stroke="#fff" strokeWidth="1.500" /></I>,
  taskview: <I w={22} h={18}><path d="M5.500 2.500h11v13h-11zM3 4.500H1.500v9H3M19 4.500h1.500v9H19" stroke="#fff" strokeWidth="1.300" /></I>,
  edge: <I w={22} h={24}><path d="M1.500 11Q3 1.500 11.500 1.500q9 0 9 11.500H8q.5 5 6 5 3.500 0 5.500-1.500V21q-3 2-7 2Q4 22.500 3.500 14.500 4 9.500 9 7.500q-1.500 1.500-1.500 3h7q0-4-4-4-5 0-9 4.500z" fill="#1383d8" /></I>,
  explorer: <I w={22} h={22}><path d="M1 2h7l2 2h11v16H1z" fill="#f5cf63" /><path d="M1 6h20v14H1z" fill="#fbe08a" /><path d="M5 20v-8h12v8h-3.500v-4h-5v4z" fill="#35a7e8" /></I>,
  chrome: <I w={24} h={24}><circle cx="12" cy="12" r="11" fill="#fbc116" /><path d="M12 12L2.500 6.500A11 11 0 0 1 21.500 6.500z" fill="#e0402e" /><path d="M12 1A11 11 0 0 1 21.500 6.500H12z" fill="#e0402e" /><path d="M2.500 6.500A11 11 0 0 0 10.500 22.900L15 14z" fill="#2fa14f" /><circle cx="12" cy="12" r="5.200" fill="#fff" /><circle cx="12" cy="12" r="4" fill="#3f80ec" /></I>,
  firefox: <I w={24} h={24}><circle cx="12" cy="12" r="10.800" fill="#e8641a" /><circle cx="13" cy="9.500" r="7.500" fill="#2a6fc8" /><path d="M11 2q7 0 7 4-3-1-4 1 3 1 2 4-2 1-4 0z" fill="#6fb8f0" /><path d="M2 7q2-2 4-4 0 3 3 4-3 2-1 5 2 4 6 3 4 0 6-5-1 12-10 12Q3 21 1.500 13z" fill="#f08a1e" /><path d="M22.500 9q1 10-8 13.500 5-4 5.500-9z" fill="#c8300f" /></I>,
  spotify: <I w={24} h={24}><circle cx="12" cy="12" r="11" fill="#1ed760" /><path d="M5.500 8.500q7-2 13.500 1.500M6 12.200q6-1.600 11.500 1.300M6.500 15.700q5-1.300 9.500 1.200" stroke="#000" strokeWidth="2" strokeLinecap="round" /></I>,
  xm: <span className="flex h-[22px] w-[24px] items-center justify-center rounded-[2px] bg-[#2e2e30] text-[11px] font-bold italic text-white"><i className="text-[#e02020]">X</i>M</span>,
  expert: <Expert />,
  arcs: <I w={24} h={24}><path d="M1 9q2-7 11-7t11 7M3 9q3-5 9-5t9 5" stroke="#c83a20" strokeDasharray="2 1.500" /><path d="M1 12q4-6 11-6t11 6M1 15q4-6 7-7M23 15q-4-6-7-7" stroke="#3f9a2a" strokeDasharray="2 1.500" /><path d="M4 11q4-5 8-4t8 4" stroke="#c8a020" strokeDasharray="2 2" /></I>,
  griffin: <Griffin />,
};
const TASKS = ["windows", "search", "taskview", "edge", "explorer", "chrome", "expert", "firefox", "spotify", "xm", "expert", "arcs", "griffin"];

function TaskBar() {
  return (
    <footer className="flex h-[40px] bg-[#020408] text-[12px] text-white">
      {TASKS.map((t, i) => (
        <button type="button" key={i} aria-label={t} className={`flex shrink-0 flex-col items-center ${i < 3 ? "w-[48px]" : "w-[49px]"} ${i === 12 ? "bg-[#3a3d41]" : ""}`}>
          <span className="flex flex-1 items-center">{apps[t]}</span>
          <span className={`h-[2px] ${i > 3 ? "bg-[#76b9ed]" : ""} ${i === 12 ? "w-full" : "w-[40px]"}`} />
        </button>
      ))}
      <div className="ml-auto flex items-center">
        <I w={12} h={8} className="mr-[11px]"><path d="M1 7l5-5.500L11 7" stroke="#fff" strokeWidth="1.300" /></I>
        <I w={18} h={14} className="mr-[9px]"><path d="M4.500 3.500h11v8h-11z" stroke="#fff" strokeWidth="1.200" /><path d="M7 5h7v5H7zM16 6h1.500v3H16zM1 1v2M4 1v2M0 3h5v2q0 2-2.500 2T0 5zM2.500 6v4" fill="#fff" stroke="#fff" strokeWidth=".8" /></I>
        <I w={14} h={14} className="mr-[6px]"><path d="M1 13Q1 2 13 1.500M4 13Q4 5 13 4.500M7 13Q7 8 13 7.500" stroke="#fff" strokeWidth="1.200" /><path d="M10 10h3v3h-3z" fill="#fff" /></I>
        <I w={17} h={14} className="mr-[8px]"><path d="M1 5h2.500L7 1.500v11L3.500 9H1z" stroke="#fff" strokeWidth="1.200" /><path d="M9.500 5q1.500 2 0 4" stroke="#fff" /><path d="M12 3q2.500 4 0 8M14 1.500q3.500 5.500 0 11" stroke="#888" /></I>
        <I w={17} h={16} className="mr-[10px]"><path d="M1 1h15v11H10l-2 3-2-3H1z" fill="#fff" /><path d="M4 4.500h9M4 6.500h9M4 8.500h6" stroke="#111" /></I>
        <span className="mr-[15px]">SWE</span>
        <time className="mr-[11px] text-center leading-[17px]">10:50<br />2017-06-04</time>
        <span className="mr-[3px] h-[40px] w-px bg-[#555]" />
      </div>
    </footer>
  );
}

export default function App() {
  return (
    <div className="flex min-h-screen flex-col overflow-x-hidden bg-[#f0f0f0] text-black font-['Roboto','Open_Sans',sans-serif] [&_button]:whitespace-nowrap">
      <header>
        <div className="flex h-[23px] items-center bg-white pl-[2px] text-[12px]">
          <Griffin size={15} />
          <h1 className="flex-1 pl-[6px]">20003234: FXOpenUK-ECN Demo Server - Demo konto - [USDJPY,M15]</h1>
          <button type="button" aria-label="Minimera" className="flex w-[45px] justify-center"><I w={11} h={11}><path d="M.5 5.500h10" stroke="#000" strokeWidth="1.200" /></I></button>
          <button type="button" aria-label="Återställ" className="flex w-[45px] justify-center"><I w={11} h={11}><path d="M.5 3h7.500v7.500h-7.500zM3 3v-2.500h7.500v7.500h-2.500" stroke="#000" strokeWidth="1.200" /></I></button>
          <button type="button" aria-label="Stäng" className="flex w-[50px] justify-center"><I w={11} h={11}><path d="M.5.5l10 10M10.500.5l-10 10" stroke="#000" strokeWidth="1.200" /></I></button>
        </div>
        <nav className="flex h-[21px] items-center border-b border-[#a0a0a0] pl-[5px] text-[12px]">
          <I w={15} h={15}><path d="M1.500 1.500h9v8h-9z M5.500 5.500h9v8h-9z" fill="#e6f2fc" stroke="#4f93d4" /><path d="M6 7h8" stroke="#9cc6ec" strokeWidth="2" /><path d="M7 12l1.500-3 2 3 2-3" stroke="#4f93d4" /></I>
          <div className="ml-[8px] flex gap-[17px]">
            {["Arkiv", "Visa", "Infoga", "Diagram", "Verktyg", "Fönster", "Hjälp"].map((m) => (
              <a key={m} href="#" className="leading-[18px]">{m}</a>
            ))}
          </div>
          <div className="ml-auto flex items-center gap-[12px] pr-[6px] text-[#606060]">
            <I w={8} h={8}><path d="M1 7h5" stroke="#606060" strokeWidth="1.500" /></I>
            <I w={8} h={8}><path d="M.5 3.500h4v4h-4zM3 3v-2.500h4.500v4h-2.500" stroke="#606060" /></I>
            <X />
          </div>
        </nav>
        <div className="flex items-start justify-between">
          <div>
            <ToolRow className="h-[27px]">
              <Tool name="Nytt diagram" icon="newChart" caret /><Tool name="Profiler" icon="profiles" caret /><Sep />
              <Tool name="Marknader" icon="market" pressed /><Tool name="Datafönster" icon="cross" /><Tool name="Navigatör" icon="nav" pressed />
              <Tool name="Terminal" icon="data" /><Tool name="Strategitester" icon="tester" pressed /><Sep />
              <button type="button" className="ml-[5px] flex h-[25px] items-center gap-[2px] text-[12px]">{icons.order}Ny Order</button>
              <button type="button" aria-label="MetaEditor" className="mx-[8px] flex h-[25px] items-center">{icons.book}</button>
              <button type="button" className="flex h-[25px] items-center gap-[3px] border-l border-t border-[#a0a0a0] bg-[#f8f8f8] pl-[3px] pr-[4px] text-[12px]">{icons.auto}AutoTrading</button>
            </ToolRow>
            <ToolRow className="h-[27px]">
              <Tool name="Staplar" icon="bars" /><Tool name="Ljus" icon="candles" pressed /><Tool name="Linje" icon="line" /><Sep />
              <Tool name="Zooma in" icon="zoomIn" /><Tool name="Zooma ut" icon="zoomOut" /><Tool name="Ordna fönster" icon="tile" /><Sep />
              <Tool name="Rulla" icon="scroll" pressed /><Tool name="Förskjut" icon="shift" pressed /><Sep />
              <Tool name="Indikatorer" icon="indicator" caret /><Tool name="Perioder" icon="clock" caret /><Tool name="Mallar" icon="template" caret />
            </ToolRow>
            <ToolRow className="h-[27px]">
              <Tool name="Markör" icon="arrow" pressed /><Tool name="Hårkors" icon="hair" /><Sep />
              <Tool name="Vertikal linje" icon="vline" /><Tool name="Horisontell linje" icon="hline" /><Tool name="Trendlinje" icon="trend" />
              <Tool name="Kanal" icon="channel" /><Tool name="Fibonacci" icon="fibo" />
              <button type="button" className="w-[26px] text-[13px] font-bold text-[#606060]">A</button>
              <Tool name="Textetikett" icon="label" /><Tool name="Former" icon="shapes" caret />
            </ToolRow>
            <ToolRow className={`h-[27px] text-[9px] text-[#303030] ${SMALL}`}>
              {["M1", "M5", "M15", "M30", "H1", "H4", "D1", "W1", "MN"].map((p) => (
                <button type="button" key={p} className={`h-[24px] w-[26px] ${p === "M15" ? "border-l border-t border-[#a0a0a0] bg-[#f8f8f8]" : ""}`}>{p}</button>
              ))}
            </ToolRow>
          </div>
          <div className="flex items-center gap-[12px] pr-[5px] pt-[5px]">
            <button type="button" aria-label="Sök"><I w={14} h={16}><circle cx="8.500" cy="5.500" r="3.700" stroke="#3a78c8" strokeWidth="1.500" /><path d="M6 8.500L1.500 14" stroke="#2a50a0" strokeWidth="2" /></I></button>
            <button type="button" aria-label="Chatt"><I w={22} h={16}><path d="M14 1.500q6 0 6 4.500 0 3-2 4v2.500l-2.500-2H14q-6 0-6-4.500t6-4.500z" fill="#f4f4f4" stroke="#909090" /><path d="M7 4.500q6 0 6 4t-6 4H5.500L3 15v-3Q1 11 1 8.500q0-4 6-4z" fill="#fff" stroke="#909090" /></I></button>
          </div>
        </div>
      </header>

      <div className="flex h-[437px]">
        <aside className="flex w-[372px] shrink-0 flex-col border-t border-[#d8d8d8]">
          <MarketWatch />
          <div className="mb-px border-b border-t border-[#a0a0a0] border-b-white" />
          <Navigator />
        </aside>
        <Charts />
      </div>

      <Tester />

      <div className="mt-auto flex h-[23px] items-center border-t border-[#a0a0a0] pt-px text-[12px]">
        <span className="flex-1 pl-[3px]">Test diagram</span>
        <span className="h-[18px] w-[116px] border-l border-[#a0a0a0] pl-[5px] leading-[18px]">Default</span>
        <span className="h-[18px] w-[102px] border-l border-[#a0a0a0]" />
        <span className="h-[18px] w-[71px] border-l border-[#a0a0a0]" />
        <span className="h-[18px] w-[71px] border-l border-[#a0a0a0]" />
        <span className="h-[18px] w-[68px] border-l border-[#a0a0a0]" />
        <span className="h-[18px] w-[70px] border-l border-[#a0a0a0]" />
        <span className="h-[18px] w-[66px] border-l border-[#a0a0a0]" />
        <span className="flex h-[18px] w-[130px] items-center gap-[4px] border-l border-[#a0a0a0] pl-[5px] text-[11px]">
          <I w={24} h={14}>
            {[0, 1, 2, 3, 4, 5, 6, 7].map((i) => (
              <g key={i}>
                <rect x={i * 3} y="1" width="2" height={9 - i} fill="#6b8e23" />
                <rect x={i * 3} y={11 - i} width="2" height={3 + i} fill="#104060" />
              </g>
            ))}
          </I>
          1871596/1905 kb
        </span>
      </div>
      <TaskBar />
    </div>
  );
}
